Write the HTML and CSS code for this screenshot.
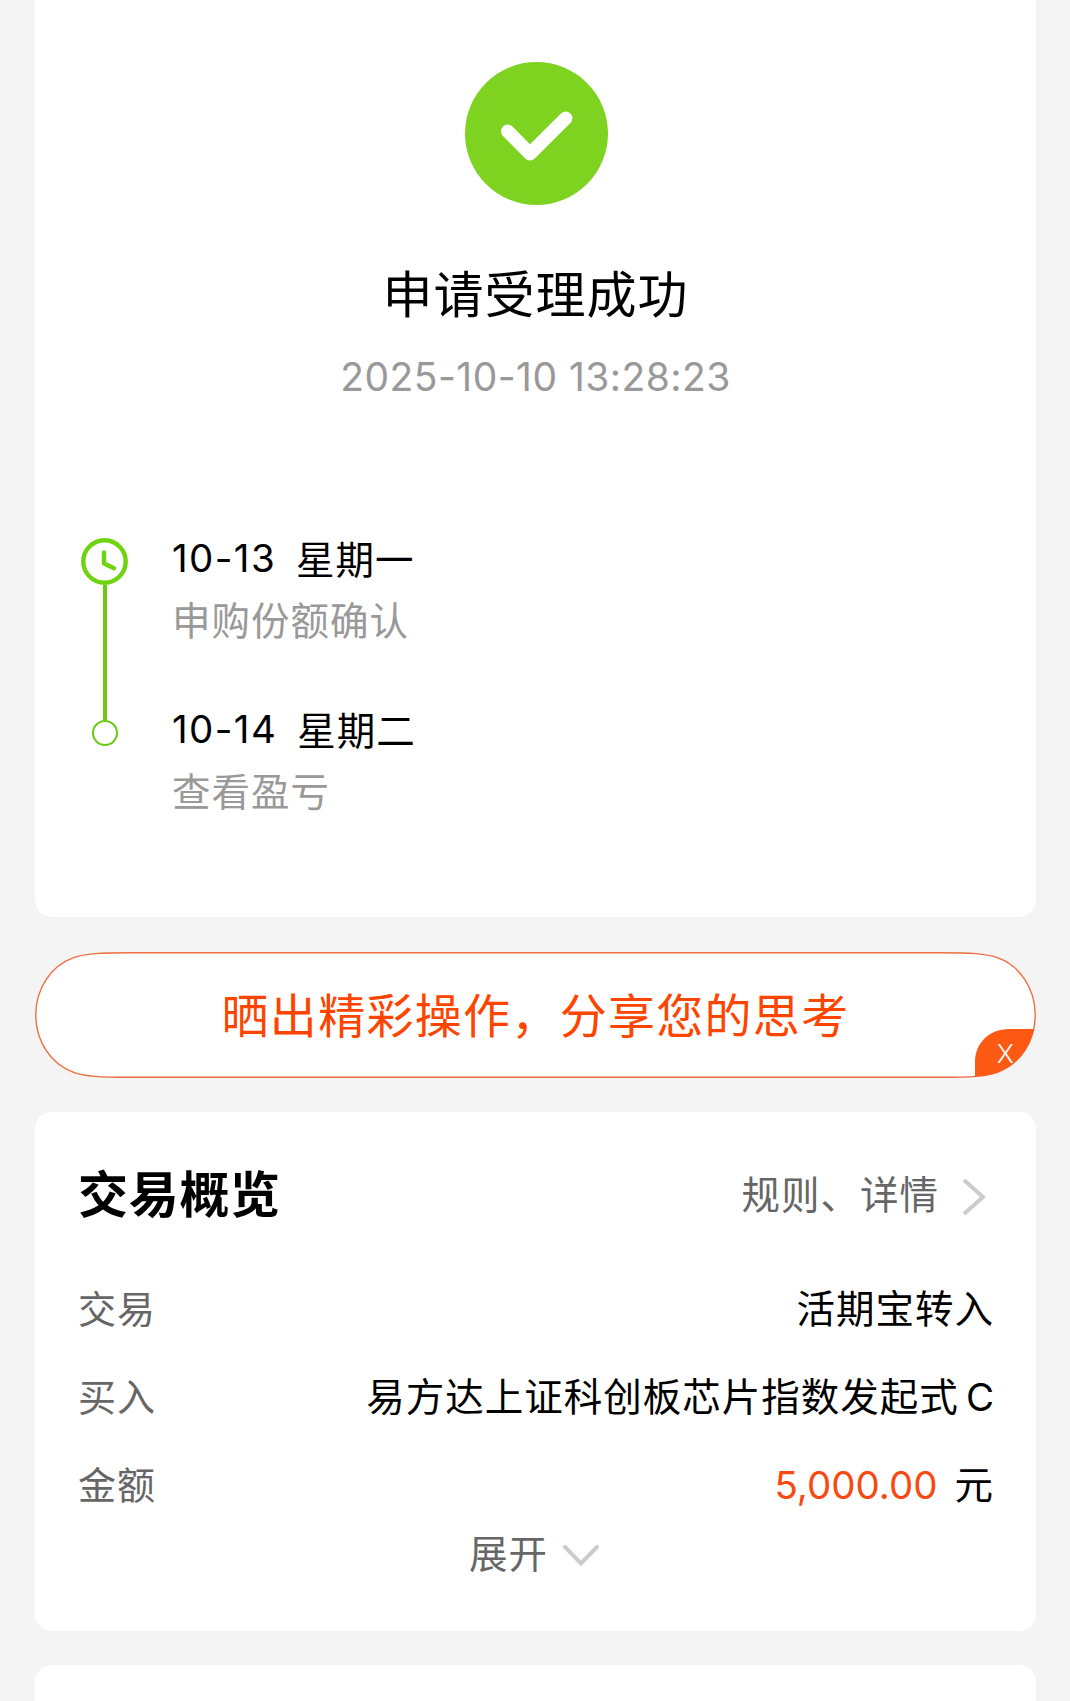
FILE: index.html
```
<!DOCTYPE html>
<html lang="zh-CN">
<head>
    <meta charset="UTF-8">
    <title>交易结果</title>
    <link rel="stylesheet" href="styles.css">
</head>
<body>
    <div class="card result">
        <svg class="success-icon" viewBox="0 0 143 143">
            <circle cx="71.5" cy="71.5" r="71.5" fill="#7ed321"/>
            <path d="M42.7 69.3L65 91.7L100.7 56.3" fill="none" stroke="#fff" stroke-width="13.4" stroke-linecap="round" stroke-linejoin="round"/>
        </svg>
        <h1 class="result-title">申请受理成功</h1>
        <div class="result-time">2025-10-10 13:28:23</div>

        <div class="timeline">
            <div class="step">
                <div class="rail">
                    <svg class="clock" viewBox="0 0 47 47">
                        <circle cx="23.5" cy="23.5" r="21.2" fill="none" stroke="#6fd30f" stroke-width="4.4"/>
                        <path d="M23 14.5V25.500L33 30.3" fill="none" stroke="#6fd30f" stroke-width="4.4" stroke-linecap="round" stroke-linejoin="round"/>
                    </svg>
                    <div class="line"></div>
                </div>
                <div class="step-body">
                    <div class="step-date"><span class="num">10-13</span><span class="weekday">星期一</span></div>
                    <div class="step-desc">申购份额确认</div>
                </div>
            </div>
            <div class="step">
                <div class="rail">
                    <div class="line line-short"></div>
                    <div class="dot"></div>
                </div>
                <div class="step-body">
                    <div class="step-date"><span class="num">10-14</span><span class="weekday">星期二</span></div>
                    <div class="step-desc">查看盈亏</div>
                </div>
            </div>
        </div>
    </div>

    <div class="share">
        <svg class="share-shape" viewBox="0 0 1001 127" preserveAspectRatio="none">
            <path d="M96 .75H905C935 .75 951 1.5 963 6C985 14 1000.25 37 1000.25 63.5S985 113 963 121C951 125.5 935 126.25 905 126.25H96C66 126.25 50 125.5 38 121C16 113 .75 90 .75 63.5S16 14 38 6C50 1.5 66 .75 96 .75Z" fill="#fff" stroke="#ee6d3c" stroke-width="1.4"/>
            <path d="M940 125.5V111C940 92 954 77.5 974 77.5H999C995 97 982 113.5 963 121C957 123.5 950 125 940 125.5Z" fill="#fc5a12"/>
        </svg>
        <span class="share-text">晒出精彩操作，分享您的思考</span>
        <span class="share-close">X</span>
    </div>

    <div class="card overview">
        <div class="overview-head">
            <h2>交易概览</h2>
            <a class="more">规则、详情
                <svg class="arrow-right" viewBox="0 0 24 38"><path d="M2 2L21 19L2 36" fill="none" stroke="#ccc" stroke-width="4"/></svg>
            </a>
        </div>
        <div class="row">
            <span class="label">交易</span>
            <span class="value">活期宝转入</span>
        </div>
        <div class="row">
            <span class="label">买入</span>
            <span class="value">易方达上证科创板芯片指数发起式<span class="fund-class">C</span></span>
        </div>
        <div class="row">
            <span class="label">金额</span>
            <span class="value"><span class="amount">5,000.00</span>元</span>
        </div>
        <div class="expand">展开
            <svg class="arrow-down" viewBox="0 0 36 22"><path d="M2 2L18 18.500L34 2" fill="none" stroke="#ccc" stroke-width="4" stroke-linecap="round"/></svg>
        </div>
    </div>

    <div class="card next"></div>
</body>
</html>
```

FILE: styles.css
```
* {
    box-sizing: border-box;
}

body {
    margin: 0;
    height: 1701px;
    padding: 0 34px 0 35px;
    overflow: hidden;
    background: #f4f4f4;
    font-family: Inter, "Noto Sans CJK SC", sans-serif;
    font-size: 38.5px;
    line-height: 42px;
    letter-spacing: 1px;
    color: #000;
}

svg {
    display: block;
    flex-shrink: 0;
}

.card {
    background: #fff;
    border-radius: 17px;
}

.result {
    height: 917px;
    padding: 62px 46px 0;
    border-radius: 0 0 17px 17px;
}

.success-icon {
    width: 143px;
    height: 143px;
    margin: 0 auto;
    transform: translateX(1px);
}

.result-title {
    margin: 60px 0 0;
    font-size: 50px;
    font-weight: 400;
    line-height: 60px;
    text-align: center;
}

.result-time {
    margin-top: 31px;
    color: #999;
    font-size: 39px;
    letter-spacing: 0.45px;
    text-align: center;
}

.timeline {
    margin-top: 140px;
}

.step {
    display: flex;
    height: 171px;
}

.rail {
    display: flex;
    flex-direction: column;
    align-items: center;
    width: 48px;
    margin-right: 43px;
}

.clock {
    width: 47px;
    height: 47px;
    margin-right: 2px;
}

.line {
    flex: 1;
    width: 4px;
    background: #6cc913;
}

.line-short {
    flex: none;
    height: 11px;
}

.dot {
    width: 26px;
    height: 26px;
    border: 2.5px solid #6cc913;
    border-radius: 50%;
}

.step-date {
    display: flex;
    gap: 20px;
    margin-top: -1px;
    height: 42px;
}

.weekday {
    margin-top: 2px;
}

.step-desc {
    margin-top: 21px;
    color: #999;
}

.num {
    letter-spacing: 1.4px;
}

.share {
    position: relative;
    display: flex;
    align-items: center;
    justify-content: center;
    height: 126px;
    margin: 35px 0 34px;
    color: #fe4500;
    font-size: 47px;
    letter-spacing: 1.3px;
}

.share-shape {
    position: absolute;
    top: 0;
    left: 0;
    width: 1001px;
    height: 126px;
}

.share-text {
    position: relative;
    padding-top: 2px;
}

.share-close {
    position: absolute;
    right: 22px;
    bottom: 8px;
    color: #fff;
    font-size: 26px;
    line-height: 32px;
    font-weight: 300;
    letter-spacing: 0;
}

.overview {
    height: 519px;
    padding: 52px 42px 0 43px;
}

.overview-head {
    display: flex;
    align-items: center;
    justify-content: space-between;
    height: 62px;
    margin-bottom: 39px;
}

.overview-head h2 {
    margin: 0;
    font-size: 50px;
    font-weight: 700;
    letter-spacing: 0.7px;
}

.more {
    display: flex;
    align-items: center;
    gap: 23px;
    margin-right: 8px;
    color: #666;
}

.arrow-right {
    width: 24px;
    height: 38px;
    margin-top: 3px;
}

.row {
    display: flex;
    align-items: center;
    justify-content: space-between;
    height: 88px;
}

.label {
    color: #666;
    font-size: 38px;
}

.fund-class {
    margin-left: 7px;
    letter-spacing: 0;
}

.amount {
    margin-right: 17px;
    color: #f84a10;
    letter-spacing: 0;
}

.expand {
    display: flex;
    align-items: center;
    justify-content: center;
    gap: 15px;
    margin-top: 4px;
    padding-right: 4px;
    color: #666;
}

.arrow-down {
    width: 36px;
    height: 22px;
    margin-top: 4px;
}

.next {
    height: 100px;
    margin-top: 34px;
}
```
